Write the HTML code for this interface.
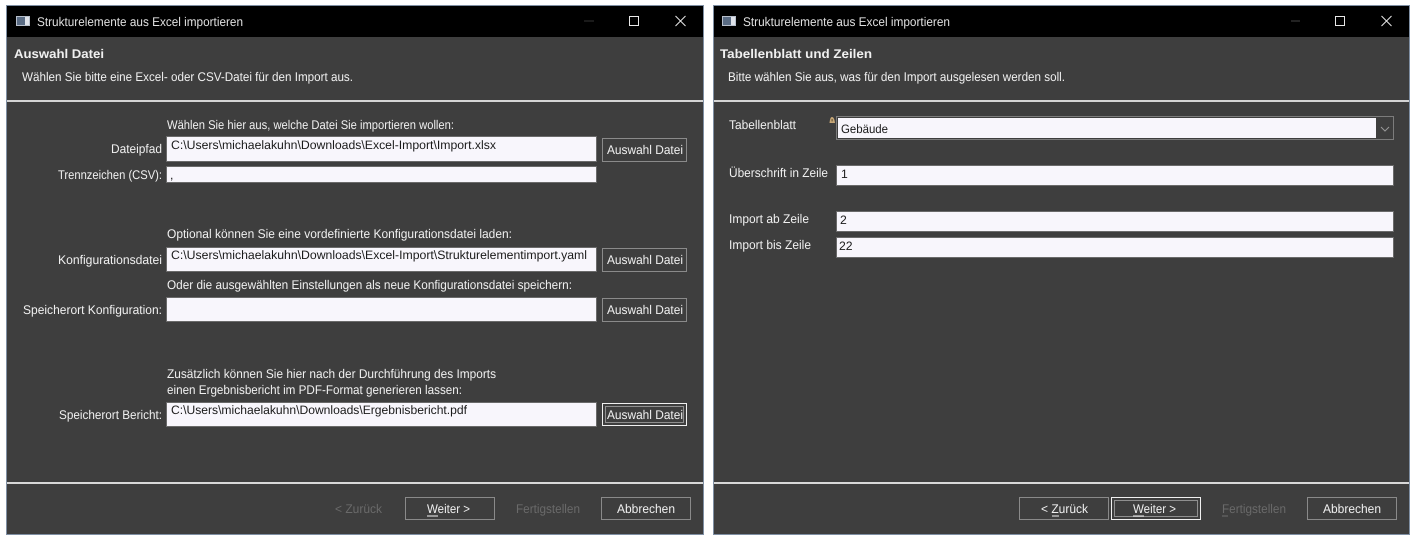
<!DOCTYPE html>
<html><head><meta charset="utf-8"><style>
html,body{margin:0;padding:0;background:#fff;width:1418px;height:540px;overflow:hidden}
svg{display:block}
text{font-family:"Liberation Sans",sans-serif;font-size:12.6px;fill:#f0f0f0}
.d{fill:#1a1a1a;font-size:12.2px}
.off{fill:#6a6a6a}
.t{fill:#e0e0e0}
.i{fill:#f8f6fc;stroke:#6a6a6a;stroke-width:1}
.b{fill:#3e3e3e;stroke:#8a8a8a;stroke-width:1}
.f{fill:#3e3e3e;stroke:#f0f0f0;stroke-width:1}
.dot{fill:none;stroke:#e0e0e0;stroke-width:1;stroke-dasharray:1 1;shape-rendering:crispEdges}
</style></head><body>
<svg width="1418" height="540" viewBox="0 0 1418 540" xmlns="http://www.w3.org/2000/svg" text-rendering="geometricPrecision">
<rect width="1418" height="540" fill="#fff"/>

<!-- LEFT WINDOW -->
<rect x="6.5" y="5.5" width="697" height="529" fill="#3e3e3e" stroke="#7f8fa3"/>
<rect x="7" y="6" width="696" height="31" fill="#000"/>
<rect x="16" y="16" width="14" height="10" fill="#b8c0cc"/><rect x="17" y="17" width="8" height="8" fill="#5a6c84"/><rect x="25" y="17" width="4" height="8" fill="#dfe3ea"/>
<text x="37" y="26" textLength="206" lengthAdjust="spacingAndGlyphs" class="t">Strukturelemente aus Excel importieren</text>
<line x1="584" y1="21" x2="594" y2="21" stroke="#333"/>
<rect x="629.5" y="16.5" width="9" height="9" fill="none" stroke="#e8e8e8"/>
<path d="M675.5 16 L685.5 26 M685.5 16 L675.5 26" stroke="#e8e8e8" fill="none"/>
<text x="14" y="58" textLength="90" lengthAdjust="spacingAndGlyphs" style="font-weight:700">Auswahl Datei</text>
<text x="22" y="81" textLength="331" lengthAdjust="spacingAndGlyphs">Wählen Sie bitte eine Excel- oder CSV-Datei für den Import aus.</text>
<rect x="7" y="100" width="696" height="2" fill="#d4d4d4"/>

<text x="167" y="129" textLength="287" lengthAdjust="spacingAndGlyphs">Wählen Sie hier aus, welche Datei Sie importieren wollen:</text>
<text x="111" y="153" textLength="51" lengthAdjust="spacingAndGlyphs">Dateipfad</text>
<rect class="i" x="166.5" y="136.5" width="430" height="25"/>
<text class="d" x="171" y="149" textLength="325" lengthAdjust="spacingAndGlyphs">C:\Users\michaelakuhn\Downloads\Excel-Import\Import.xlsx</text>
<rect class="b" x="602.5" y="138.5" width="84" height="23"/>
<text x="607" y="154" textLength="76" lengthAdjust="spacingAndGlyphs">Auswahl Datei</text>

<text x="58" y="179" textLength="104" lengthAdjust="spacingAndGlyphs">Trennzeichen (CSV):</text>
<rect class="i" x="166.5" y="166.5" width="430" height="16"/>
<text class="d" x="170" y="179">,</text>

<text x="167" y="238" textLength="345" lengthAdjust="spacingAndGlyphs">Optional können Sie eine vordefinierte Konfigurationsdatei laden:</text>
<text x="58" y="264" textLength="104" lengthAdjust="spacingAndGlyphs">Konfigurationsdatei</text>
<rect class="i" x="166.5" y="247.5" width="430" height="24"/>
<text class="d" x="171" y="259" textLength="416" lengthAdjust="spacingAndGlyphs">C:\Users\michaelakuhn\Downloads\Excel-Import\Strukturelementimport.yaml</text>
<rect class="b" x="602.5" y="248.5" width="84" height="23"/>
<text x="607" y="264" textLength="76" lengthAdjust="spacingAndGlyphs">Auswahl Datei</text>

<text x="167" y="289" textLength="405" lengthAdjust="spacingAndGlyphs">Oder die ausgewählten Einstellungen als neue Konfigurationsdatei speichern:</text>
<text x="23" y="314" textLength="139" lengthAdjust="spacingAndGlyphs">Speicherort Konfiguration:</text>
<rect class="i" x="166.5" y="297.5" width="430" height="24"/>
<rect class="b" x="602.5" y="298.5" width="84" height="23"/>
<text x="607" y="314" textLength="76" lengthAdjust="spacingAndGlyphs">Auswahl Datei</text>

<text x="167" y="378" textLength="329" lengthAdjust="spacingAndGlyphs">Zusätzlich können Sie hier nach der Durchführung des Imports</text>
<text x="167" y="394" textLength="295" lengthAdjust="spacingAndGlyphs">einen Ergebnisbericht im PDF-Format generieren lassen:</text>
<text x="59" y="419" textLength="103" lengthAdjust="spacingAndGlyphs">Speicherort Bericht:</text>
<rect class="i" x="166.5" y="402.5" width="430" height="24"/>
<text class="d" x="171" y="414" textLength="296" lengthAdjust="spacingAndGlyphs">C:\Users\michaelakuhn\Downloads\Ergebnisbericht.pdf</text>
<rect class="f" x="602.5" y="403.5" width="84" height="22"/>
<rect class="dot" x="605.5" y="406.5" width="78" height="16"/>
<text x="607" y="419" textLength="76" lengthAdjust="spacingAndGlyphs">Auswahl Datei</text>

<rect x="7" y="482" width="696" height="2" fill="#d8d8d8"/>
<text class="off" x="335" y="513" textLength="47" lengthAdjust="spacingAndGlyphs">&lt; Zurück</text>
<rect class="b" x="405.5" y="497.5" width="89" height="22"/>
<text x="427" y="513" textLength="43" lengthAdjust="spacingAndGlyphs">Weiter &gt;</text>
<line x1="427" y1="516" x2="438" y2="516" stroke="#f2f2f2"/>
<text class="off" x="516" y="513" textLength="64" lengthAdjust="spacingAndGlyphs">Fertigstellen</text>
<rect class="b" x="601.5" y="497.5" width="89" height="22"/>
<text x="617" y="513" textLength="58" lengthAdjust="spacingAndGlyphs">Abbrechen</text>

<!-- RIGHT WINDOW -->
<rect x="713.5" y="5.5" width="696" height="529" fill="#3e3e3e" stroke="#7f8fa3"/>
<rect x="714" y="6" width="695" height="31" fill="#000"/>
<rect x="722" y="16" width="14" height="10" fill="#b8c0cc"/><rect x="723" y="17" width="8" height="8" fill="#5a6c84"/><rect x="731" y="17" width="4" height="8" fill="#dfe3ea"/>
<text x="743" y="26" textLength="207" lengthAdjust="spacingAndGlyphs" class="t">Strukturelemente aus Excel importieren</text>
<line x1="1291" y1="21" x2="1300" y2="21" stroke="#444"/>
<rect x="1335.5" y="16.5" width="9" height="9" fill="none" stroke="#e8e8e8"/>
<path d="M1381.5 16 L1391.5 26 M1391.5 16 L1381.5 26" stroke="#e8e8e8" fill="none"/>
<text x="720" y="58" textLength="152" lengthAdjust="spacingAndGlyphs" style="font-weight:700">Tabellenblatt und Zeilen</text>
<text x="728" y="81" textLength="337" lengthAdjust="spacingAndGlyphs">Bitte wählen Sie aus, was für den Import ausgelesen werden soll.</text>
<rect x="714" y="100" width="695" height="2" fill="#d4d4d4"/>

<text x="729" y="129" textLength="67" lengthAdjust="spacingAndGlyphs">Tabellenblatt</text>
<path d="M832 117 C833.5 117 834.5 119 835 123 L829.5 123 C830 119 830.5 117 832 117 Z" fill="#c8a878"/>
<rect x="831.6" y="119" width="1" height="2.4" fill="#5a4a30"/>
<rect x="836.5" y="116.5" width="557" height="23" fill="#3e3e3e" stroke="#7c7c7c"/>
<rect x="838" y="118" width="538" height="20" fill="#f8f6fc"/>
<path d="M1381 127 L1385 131 L1389 127" fill="none" stroke="#999"/>
<text class="d" x="841" y="133" textLength="47" lengthAdjust="spacingAndGlyphs">Gebäude</text>

<text x="729" y="177" textLength="99" lengthAdjust="spacingAndGlyphs">Überschrift in Zeile</text>
<rect class="i" x="836.5" y="165.5" width="557" height="20"/>
<text class="d" x="841" y="178">1</text>
<text x="729" y="223" textLength="80" lengthAdjust="spacingAndGlyphs">Import ab Zeile</text>
<rect class="i" x="836.5" y="211.5" width="557" height="20"/>
<text class="d" x="840" y="224">2</text>
<text x="729" y="249" textLength="82" lengthAdjust="spacingAndGlyphs">Import bis Zeile</text>
<rect class="i" x="836.5" y="237.5" width="557" height="20"/>
<text class="d" x="839" y="250">22</text>

<rect x="714" y="482" width="695" height="2" fill="#d8d8d8"/>
<rect class="b" x="1019.5" y="497.5" width="89" height="22"/>
<text x="1041" y="513" textLength="47" lengthAdjust="spacingAndGlyphs">&lt; Zurück</text>
<line x1="1052" y1="516" x2="1059" y2="516" stroke="#f2f2f2"/>
<rect class="f" x="1111.5" y="497.5" width="89" height="22"/>
<rect class="dot" x="1114.5" y="500.5" width="83" height="16"/>
<text x="1133" y="513" textLength="43" lengthAdjust="spacingAndGlyphs">Weiter &gt;</text>
<line x1="1133" y1="516" x2="1144" y2="516" stroke="#f2f2f2"/>
<text class="off" x="1222" y="513" textLength="64" lengthAdjust="spacingAndGlyphs">Fertigstellen</text>
<line x1="1222" y1="516" x2="1228" y2="516" stroke="#6e6e6e"/>
<rect class="b" x="1307.5" y="497.5" width="89" height="22"/>
<text x="1323" y="513" textLength="58" lengthAdjust="spacingAndGlyphs">Abbrechen</text>
</svg>
</body></html>
